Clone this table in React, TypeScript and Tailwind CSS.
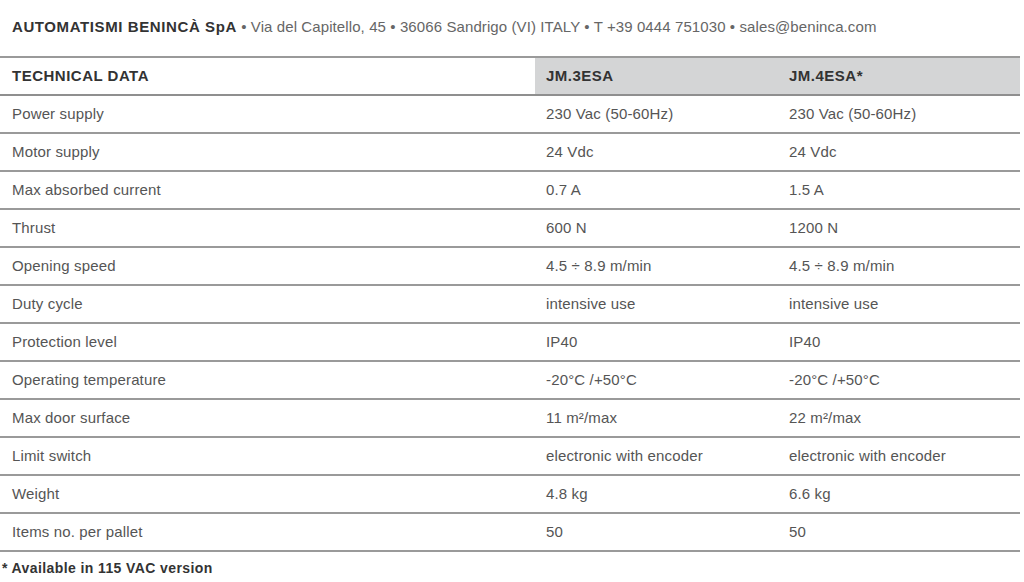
const ROWS: [string, string, string][] = [
  ["Power supply", "230 Vac (50-60Hz)", "230 Vac (50-60Hz)"],
  ["Motor supply", "24 Vdc", "24 Vdc"],
  ["Max absorbed current", "0.7 A", "1.5 A"],
  ["Thrust", "600 N", "1200 N"],
  ["Opening speed", "4.5 ÷ 8.9 m/min", "4.5 ÷ 8.9 m/min"],
  ["Duty cycle", "intensive use", "intensive use"],
  ["Protection level", "IP40", "IP40"],
  ["Operating temperature", "-20°C /+50°C", "-20°C /+50°C"],
  ["Max door surface", "11 m²/max", "22 m²/max"],
  ["Limit switch", "electronic with encoder", "electronic with encoder"],
  ["Weight", "4.8 kg", "6.6 kg"],
  ["Items no. per pallet", "50", "50"],
];

export default function App() {
  return (
    <div
      className="w-[1024px] h-[582px] bg-white text-[#555] overflow-hidden"
      style={{ fontFamily: '"Liberation Sans", Arial, sans-serif' }}
    >
      {/* Company line */}
      <div className="h-[56px] pl-[12px] pt-[17px] text-[15px] leading-[20px] text-[#666] tracking-[0.1px]">
        <span className="font-bold text-[#333] tracking-[0.6px]">AUTOMATISMI BENINCÀ SpA</span> • Via del Capitello,
        45 • 36066 Sandrigo (VI) ITALY • T +39 0444 751030 • sales@beninca.com
      </div>

      {/* Table */}
      <div className="w-[1020px] border-t-2 border-[#9a9a9a]">
        <div className="grid grid-cols-[535px_243px_1fr] h-[38px] border-b-2 border-[#8f8f8f] text-[15px] font-bold text-[#333] tracking-[0.5px]">
          <div className="pl-[12px] flex items-center">TECHNICAL DATA</div>
          <div className="pl-[11px] flex items-center bg-[#d4d5d6]">JM.3ESA</div>
          <div className="pl-[11px] flex items-center bg-[#d4d5d6]">JM.4ESA*</div>
        </div>
        {ROWS.map(([label, a, b]) => (
          <div
            key={label}
            className="grid grid-cols-[535px_243px_1fr] h-[38px] border-b-2 border-[#9a9a9a] text-[15px] tracking-[0.15px]"
          >
            <div className="pl-[12px] flex items-center">{label}</div>
            <div className="pl-[11px] flex items-center">{a}</div>
            <div className="pl-[11px] flex items-center">{b}</div>
          </div>
        ))}
      </div>

      <div className="pl-[2px] pt-[6px] text-[14px] font-bold text-[#333] tracking-[0.4px]">
        * Available in 115 VAC version
      </div>
    </div>
  );
}
